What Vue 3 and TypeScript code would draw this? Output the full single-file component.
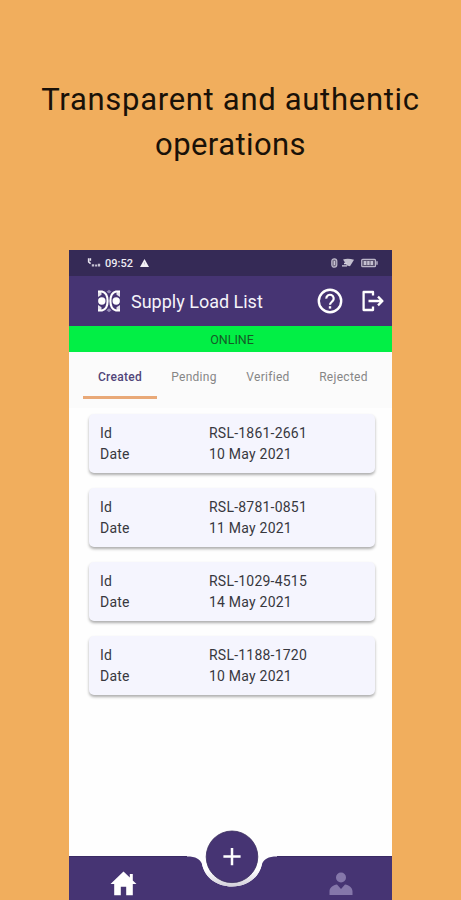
<script setup lang="ts">
interface Load {
  id: string
  date: string
}

const tabs: string[] = ['Created', 'Pending', 'Verified', 'Rejected']
const activeTab = 'Created'
const loads: Load[] = [
  { id: 'RSL-1861-2661', date: '10 May 2021' },
  { id: 'RSL-8781-0851', date: '11 May 2021' },
  { id: 'RSL-1029-4515', date: '14 May 2021' },
  { id: 'RSL-1188-1720', date: '10 May 2021' },
]
</script>

<template>
  <main class="promo">
    <h1 class="headline">
      <span class="line first">Transparent and authentic</span>
      <span class="line second">operations</span>
    </h1>

    <section class="phone">
      <div class="status">
        <svg class="signal" viewBox="0 0 15 12" width="15" height="12">
          <path d="M1.6 1.2v3.6l2 1.8M3.4 1.2v2.6" fill="none" stroke="#e6e3ee" stroke-width="1.5" />
          <path d="M4.8 7.3h2.4v2.2H4.800zM8.100 7.600h2v1.900h-2zM10.800 6.800h2.400v2.700h-2.400z" fill="#c6c2d3" />
        </svg>
        <span class="clock">09:52</span>
        <svg class="warn" viewBox="0 0 9 8" width="9" height="8">
          <path d="M4.5 0 9 8H0z" fill="#f2f0f6" />
          <path d="M4.5 3v2.400" stroke="#b5b0c4" stroke-width=".7" />
        </svg>
        <span class="grow"></span>
        <svg viewBox="0 0 50 12" width="50" height="12">
          <rect x="2.8" y="1.800" width="5" height="8.400" rx="2.400" fill="#777088" stroke="#bcb7c9" stroke-width="1.200" />
          <path d="M5.300 4v4" stroke="#ded9e8" />
          <path d="M14 2.400Q19 .8 25 2.700L21 9.200l-3-.6z" fill="#c4c0cf" />
          <path d="M13 8.900h5M15 6.500h3" stroke="#d5d1de" stroke-width="1.400" />
          <rect x="32.700" y="2.300" width="13.800" height="7.400" rx="1" fill="#5b536f" stroke="#bcb7c9" stroke-width="1.200" />
          <path d="M34.700 4h2.700v4h-2.700zM38.200 4h2.400v4h-2.400zM41.500 4H44v4h-2.500z" fill="#c4c0cf" />
          <path d="M48 4.300v3.400" stroke="#bcb7c9" stroke-width="1.400" />
        </svg>
      </div>

      <header class="appbar">
        <svg class="logo" viewBox="0 0 24 24" width="24" height="24">
          <path d="m9.500 2.800 2.500-2 2.500 2L12 4.600zM9.500 21.200l2.500-2 2.500 2-2.500 2z" fill="#9186b4" />
          <g fill="none" stroke="#fff" stroke-width="2.100">
            <path d="M1 2.500H5C8.500 3.400 10.600 7.200 10.600 12S8.500 20.600 5 21.500H1" />
            <path d="M23 2.500H19C15.500 3.400 13.400 7.200 13.400 12S15.500 20.600 19 21.500H23" />
          </g>
          <g fill="#fff">
            <circle cx="4.800" cy="12" r="3.700" />
            <circle cx="19.200" cy="12" r="3.700" />
            <path d="M1 2v6l3.500-2.200V3zM1 22v-6l3.500 2.200V21zM23 2v6l-3.500-2.200V3zM23 22v-6l-3.500 2.200V21z" opacity=".85" />
          </g>
        </svg>
        <span class="title">Supply Load List</span>
        <span class="grow"></span>
        <svg class="help" viewBox="0 0 26 26" width="26" height="26">
          <circle cx="13" cy="13" r="11.200" fill="none" stroke="#fff" stroke-width="2.400" />
          <path d="M9.300 10.600a3.700 3.700 0 1 1 6.200 2.600C14 14.500 13 15 13 16.800" fill="none" stroke="#fff" stroke-width="2.200" />
          <path d="M11.800 18.200h2.400v2.400h-2.400z" fill="#fff" />
        </svg>
        <svg class="exit" viewBox="0 0 22 22" width="22" height="22">
          <path d="M11 5.500V2H1.600v18H11v-3.500M6.500 11H20M16 6.600l4.400 4.400-4.400 4.400" fill="none" stroke="#fff" stroke-width="2.300" stroke-linejoin="round" />
        </svg>
      </header>

      <div class="online">ONLINE</div>

      <nav class="tabs">
        <span v-for="tab in tabs" :key="tab" class="tab" :class="{ active: tab === activeTab }">{{ tab }}</span>
      </nav>

      <div class="list">
        <article v-for="load in loads" :key="load.id" class="card">
          <span>Id</span><span>{{ load.id }}</span>
          <span>Date</span><span>{{ load.date }}</span>
        </article>
      </div>

      <footer class="bottom">
        <svg viewBox="0 0 323 72" width="323" height="72">
          <defs>
            <linearGradient id="rim" x1="0" y1="0" x2="0" y2="1">
              <stop offset=".5" stop-color="#fff" />
              <stop offset="1" stop-color="#d2cfda" />
            </linearGradient>
          </defs>
          <path d="M0 28.500H118C127 28.500 131 31 133 36C136 50 148 58.500 163 58.500S190 50 193 36C195 31 199 28.500 208 28.500H323V72H0Z" fill="#463473" />
          <path d="M0 28.500H118M208 28.500H323" stroke="#3a2a64" />
          <path d="M133 36C136 50 148 58.500 163 58.500S190 50 193 36L190 25H136Z" fill="url(#rim)" />
          <circle cx="163" cy="28.800" r="25.800" fill="#463473" stroke="#382c5c" stroke-width=".8" />
          <path d="M163 20v17.200M154.400 28.600h17.200" stroke="#fff" stroke-width="2.500" />
          <path d="M54.500 43.500 41.500 56h3.700v11.300h6.600v-8.500h5.400v8.500h6.600V56h3.700l-3.700-3.500V46h-3v3.500z" fill="#fff" />
          <g fill="#8577aa">
            <circle cx="272" cy="49.500" r="5" />
            <path d="M260.500 67v-3.500c0-4 3.500-6.500 7.500-7l4 4.500 4-4.500c4 .5 7.500 3 7.500 7V67z" />
          </g>
        </svg>
      </footer>
    </section>
  </main>
</template>

<style>
body {
  background: #f1ae5d;
}
</style>

<style scoped>
.promo {
  width: 461px;
  height: 900px;
  overflow: hidden;
  display: flex;
  flex-direction: column;
  background: #f1ae5d;
  font-family: Roboto, "Liberation Sans", sans-serif;
}
.headline {
  height: 250px;
  flex: none;
  margin: 0;
  padding-top: 77px;
  box-sizing: border-box;
  color: #191108;
  font-size: 31px;
  font-weight: 400;
  line-height: 45px;
  text-align: center;
}
.line {
  display: block;
  white-space: nowrap;
}
.first {
  letter-spacing: 0.7px;
}
.second {
  letter-spacing: 0.4px;
}
.phone {
  width: 323px;
  flex: 1;
  margin-left: 69px;
  display: flex;
  flex-direction: column;
  background: #fefefe;
}
.grow {
  flex: 1;
}
.status {
  height: 26px;
  display: flex;
  align-items: center;
  padding: 0 13px 0 18px;
  background: #352a56;
  color: #edebf2;
  box-sizing: border-box;
}
.clock {
  margin-left: 3px;
  font-size: 11px;
  font-weight: 500;
}
.warn {
  margin-left: 7px;
}
.appbar {
  height: 50px;
  display: flex;
  align-items: center;
  padding: 0 8px 0 28px;
  box-sizing: border-box;
  background: #463473;
  color: #f5f3f9;
}
.title {
  margin-left: 10px;
  font-size: 18px;
}
.exit {
  margin-left: 19px;
}
.online {
  height: 26px;
  line-height: 27px;
  background: #02ef45;
  color: #155b27;
  font-size: 12.5px;
  text-align: center;
  padding-left: 3px;
}
.tabs {
  height: 56px;
  padding: 0 12px 0 14px;
  display: grid;
  grid-template-columns: repeat(3, 74px) 77px;
  align-items: start;
  background: #fbfbfb;
  box-sizing: border-box;
}
.tab {
  height: 47px;
  line-height: 50px;
  box-sizing: border-box;
  color: #868686;
  font-size: 12px;
  letter-spacing: 0.3px;
  text-align: center;
  border-bottom: 3px solid transparent;
}
.tab.active {
  color: #514579;
  font-weight: 500;
  border-color: #e9a978;
}
.list {
  padding: 5.5px 17px 0 20px;
  display: grid;
  gap: 15.3px;
}
.card {
  height: 59px;
  box-sizing: border-box;
  padding: 8.5px 11px 0;
  display: grid;
  grid-template-columns: 109px 1fr;
  grid-auto-rows: 21px;
  align-items: center;
  background: #f5f5fe;
  border-radius: 5px;
  box-shadow: 0 2px 3px rgba(0, 0, 0, 0.32);
  color: #38383e;
  font-size: 14px;
  letter-spacing: 0.22px;
}
.bottom {
  height: 72px;
  margin-top: auto;
}
.bottom svg {
  display: block;
}
</style>
